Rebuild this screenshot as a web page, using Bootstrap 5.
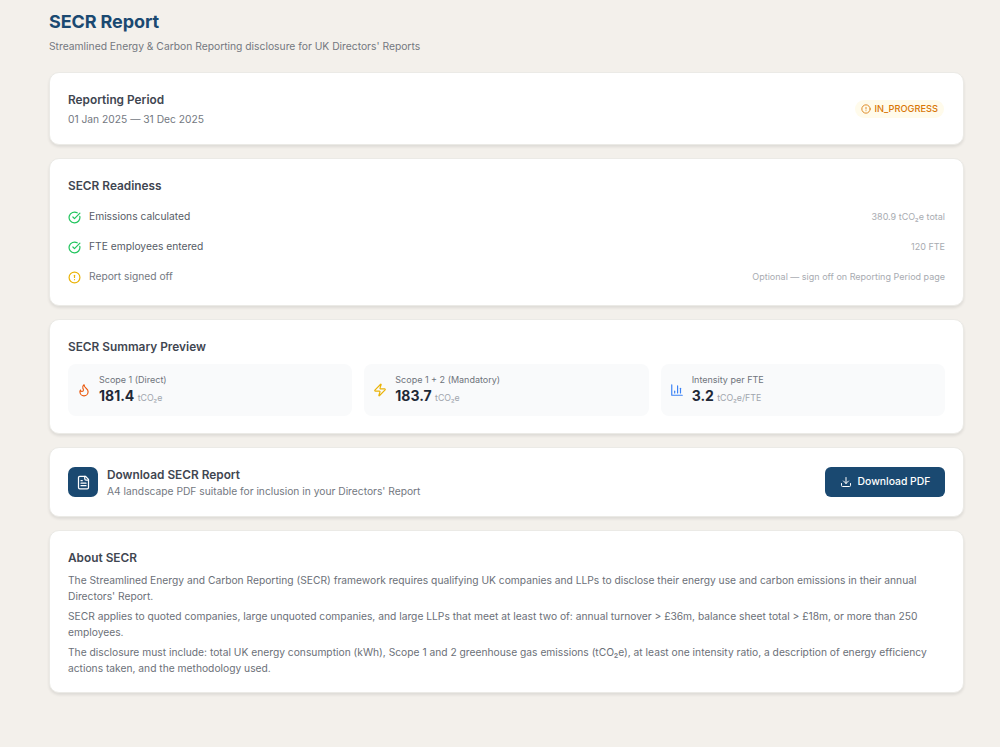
<!DOCTYPE html>
<html lang="en">
<head>
<meta charset="utf-8">
<title>SECR Report</title>
<link href="https://cdn.jsdelivr.net/npm/bootstrap@5.3.0/dist/css/bootstrap.min.css" rel="stylesheet">
<style>
html, body { height: 100%; }
body { background: #f3f0eb; font-family: Inter, "Liberation Sans", sans-serif; color: #1f2937; }
.page-wrap { padding: 12px 36px 0 49px; }
.page-title { font-size: 18px; line-height: 20px; font-weight: 700; color: #1a4971; margin: 0 0 6px; letter-spacing: -.1px; }
.page-sub { font-size: 10.3px; line-height: 16px; color: #73787f; margin: 0 0 18px; }
.panel { background: #fff; border: 1px solid #ebeae6; border-radius: 10px; box-shadow: 0 2px 3px rgba(0,0,0,.09); margin-bottom: 13px; padding: 18px; }
.panel-title { font-size: 11.85px; line-height: 18px; font-weight: 600; color: #3f4651; margin: 0; }
.panel-period { padding-bottom: 17px; }
.period-line { font-size: 10.25px; line-height: 16px; color: #73787f; margin-top: 2px; }
.state-pill { font-size: 9.25px; line-height: 12px; font-weight: 500; color: #d97706; background: #fffbeb; border-radius: 9px; padding: 3px 6px; gap: 3px; margin-right: 1px; }
.panel-readiness { padding-bottom: 13px; }
.readiness-title { margin-bottom: 7px; }
.check-row { height: 30px; font-size: 10.25px; color: #565c66; gap: 8px; }
.check-row.muted-row { color: #73787f; }
.check-note { font-size: 9px; color: #a8abb1; }
.panel-summary { padding-bottom: 17px; }
.metric { background: #f9fafb; border-radius: 8px; height: 52px; padding: 0 9px; gap: 8px; flex: 1 1 0; }
.metric-label { font-size: 9px; line-height: 12px; color: #6f747c; margin-bottom: 1px; }
.metric-value { font-size: 14px; line-height: 18px; font-weight: 700; color: #1f2937; }
.metric-unit { font-size: 8.8px; font-weight: 400; color: #a0a5ad; }
.metrics { gap: 12px; margin-top: 8px; }
.panel-download { padding-top: 19px; padding-bottom: 17px; }
.doc-tile { width: 30px; height: 30px; background: #1a4971; border-radius: 7px; margin-right: 9px; }
.dl-title { font-size: 11.85px; line-height: 16px; font-weight: 600; color: #3f4651; }
.dl-sub { font-size: 10.25px; line-height: 16px; color: #73787f; }
.dl-btn { background: #1a4971; color: #fff; border: 0; border-radius: 6px; font-size: 10.4px; font-weight: 500; height: 30px; width: 120px; gap: 6px; }
.dl-btn:hover { background: #1a4971; color: #fff; }
.panel-about { padding-bottom: 16px; }
.about-title { margin-bottom: 5px; }
.about-text { font-size: 10.25px; line-height: 16px; color: #6b7078; margin: 0 0 4px; }
</style>
</head>
<body>
<div class="page-wrap">
  <h1 class="page-title">SECR Report</h1>
  <p class="page-sub">Streamlined Energy &amp; Carbon Reporting disclosure for UK Directors' Reports</p>

  <div class="panel panel-period d-flex justify-content-between align-items-center">
    <div>
      <div class="panel-title">Reporting Period</div>
      <div class="period-line">01 Jan 2025 — 31 Dec 2025</div>
    </div>
    <span class="state-pill d-inline-flex align-items-center">
      <svg width="10" height="10" viewBox="0 0 24 24" fill="none" stroke="#d97706" stroke-width="2" stroke-linecap="round" stroke-linejoin="round"><circle cx="12" cy="12" r="10"/><path d="M12 8v4"/><path d="M12 16h.01"/></svg>
      IN_PROGRESS
    </span>
  </div>

  <div class="panel panel-readiness">
    <div class="panel-title readiness-title">SECR Readiness</div>
    <div class="check-row d-flex align-items-center">
      <svg width="13" height="13" viewBox="0 0 24 24" fill="none" stroke="#22c55e" stroke-width="2.25" stroke-linecap="round" stroke-linejoin="round"><path d="M21.801 10A10 10 0 1 1 17 3.335"/><path d="m9 11 3 3L22 4"/></svg>
      <span>Emissions calculated</span>
      <span class="check-note ms-auto">380.9 tCO₂e total</span>
    </div>
    <div class="check-row d-flex align-items-center">
      <svg width="13" height="13" viewBox="0 0 24 24" fill="none" stroke="#22c55e" stroke-width="2.25" stroke-linecap="round" stroke-linejoin="round"><path d="M21.801 10A10 10 0 1 1 17 3.335"/><path d="m9 11 3 3L22 4"/></svg>
      <span>FTE employees entered</span>
      <span class="check-note ms-auto">120 FTE</span>
    </div>
    <div class="check-row muted-row d-flex align-items-center">
      <svg width="13" height="13" viewBox="0 0 24 24" fill="none" stroke="#eab308" stroke-width="2.25" stroke-linecap="round" stroke-linejoin="round"><circle cx="12" cy="12" r="10"/><path d="M12 8v4"/><path d="M12 16h.01"/></svg>
      <span>Report signed off</span>
      <span class="check-note ms-auto">Optional — sign off on Reporting Period page</span>
    </div>
  </div>

  <div class="panel panel-summary">
    <div class="panel-title">SECR Summary Preview</div>
    <div class="metrics d-flex">
      <div class="metric d-flex align-items-center">
        <svg width="14" height="14" viewBox="0 0 24 24" fill="none" stroke="#ea580c" stroke-width="2" stroke-linecap="round" stroke-linejoin="round"><path d="M8.5 14.5A2.5 2.5 0 0 0 11 12c0-1.38-.5-2-1-3-1.072-2.143-.224-4.054 2-6 .5 2.5 2 4.9 4 6.5 2 1.6 3 3.5 3 5.5a7 7 0 1 1-14 0c0-1.153.433-2.294 1-3a2.5 2.5 0 0 0 2.5 2.5z"/></svg>
        <div>
          <div class="metric-label">Scope 1 (Direct)</div>
          <div class="metric-value">181.4 <span class="metric-unit">tCO₂e</span></div>
        </div>
      </div>
      <div class="metric d-flex align-items-center">
        <svg width="14" height="14" viewBox="0 0 24 24" fill="none" stroke="#eab308" stroke-width="2" stroke-linecap="round" stroke-linejoin="round"><path d="M4 14a1 1 0 0 1-.78-1.63l9.9-10.2a.5.5 0 0 1 .86.46l-1.92 6.02A1 1 0 0 0 13 10h7a1 1 0 0 1 .78 1.63l-9.9 10.2a.5.5 0 0 1-.86-.46l1.92-6.02A1 1 0 0 0 11 14z"/></svg>
        <div>
          <div class="metric-label">Scope 1 + 2 (Mandatory)</div>
          <div class="metric-value">183.7 <span class="metric-unit">tCO₂e</span></div>
        </div>
      </div>
      <div class="metric d-flex align-items-center">
        <svg width="14" height="14" viewBox="0 0 24 24" fill="none" stroke="#3b82f6" stroke-width="2" stroke-linecap="round" stroke-linejoin="round"><path d="M3 3v18h18"/><path d="M18 17V9"/><path d="M13 17V5"/><path d="M8 17v-3"/></svg>
        <div>
          <div class="metric-label">Intensity per FTE</div>
          <div class="metric-value">3.2 <span class="metric-unit">tCO₂e/FTE</span></div>
        </div>
      </div>
    </div>
  </div>

  <div class="panel panel-download d-flex align-items-start justify-content-between">
    <div class="d-flex align-items-start">
      <div class="doc-tile d-flex align-items-center justify-content-center">
        <svg width="15" height="15" viewBox="0 0 24 24" fill="none" stroke="#fff" stroke-width="2" stroke-linecap="round" stroke-linejoin="round"><path d="M15 2H6a2 2 0 0 0-2 2v16a2 2 0 0 0 2 2h12a2 2 0 0 0 2-2V7Z"/><path d="M14 2v4a2 2 0 0 0 2 2h4"/><path d="M10 9H8"/><path d="M16 13H8"/><path d="M16 17H8"/></svg>
      </div>
      <div>
        <div class="dl-title">Download SECR Report</div>
        <div class="dl-sub">A4 landscape PDF suitable for inclusion in your Directors' Report</div>
      </div>
    </div>
    <button type="button" class="btn dl-btn d-inline-flex align-items-center justify-content-center p-0">
      <svg width="12" height="12" viewBox="0 0 24 24" fill="none" stroke="#fff" stroke-width="2" stroke-linecap="round" stroke-linejoin="round"><path d="M21 15v4a2 2 0 0 1-2 2H5a2 2 0 0 1-2-2v-4"/><path d="m7 10 5 5 5-5"/><path d="M12 15V3"/></svg>
      Download PDF
    </button>
  </div>

  <div class="panel panel-about">
    <div class="panel-title about-title">About SECR</div>
    <p class="about-text">The Streamlined Energy and Carbon Reporting (SECR) framework requires qualifying UK companies and LLPs to disclose their energy use and carbon emissions in their annual Directors' Report.</p>
    <p class="about-text">SECR applies to quoted companies, large unquoted companies, and large LLPs that meet at least two of: annual turnover &gt; £36m, balance sheet total &gt; £18m, or more than 250 employees.</p>
    <p class="about-text mb-0">The disclosure must include: total UK energy consumption (kWh), Scope 1 and 2 greenhouse gas emissions (tCO₂e), at least one intensity ratio, a description of energy efficiency actions taken, and the methodology used.</p>
  </div>
</div>
<script src="https://cdn.jsdelivr.net/npm/bootstrap@5.3.0/dist/js/bootstrap.bundle.min.js"></script>
</body>
</html>
